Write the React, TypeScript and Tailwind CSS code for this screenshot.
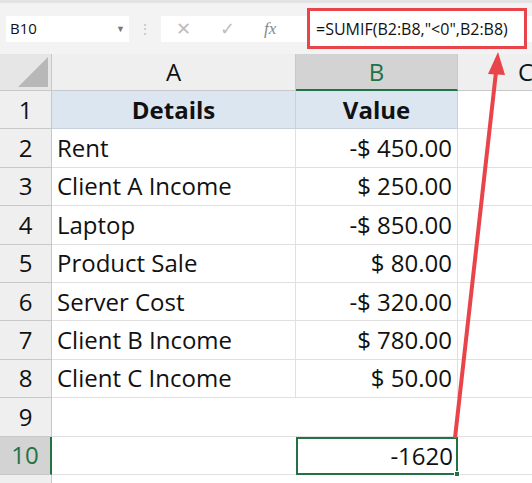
const rows: [string, string][] = [
  ['Rent', '-$ 450.00'],
  ['Client A Income', '$ 250.00'],
  ['Laptop', '-$ 850.00'],
  ['Product Sale', '$ 80.00'],
  ['Server Cost', '-$ 320.00'],
  ['Client B Income', '$ 780.00'],
  ['Client C Income', '$ 50.00'],
];

const font = { fontFamily: '"Open Sans", "Noto Sans", sans-serif' };

export default function App() {
  return (
    <div className="relative w-[532px] h-[483px] overflow-hidden bg-white text-[#111]" style={font}>
      {/* formula bar */}
      <div className="h-[54px] bg-[#f3f3f3] flex items-center pl-[6px] gap-[10px] border-t-[3px] border-[#e2e2e2]">
        <div className="w-[123px] h-[26px] bg-white flex items-center justify-between px-[4px] text-[15px]">
          <span>B10</span>
          <span className="text-[#777] text-[9px]">▼</span>
        </div>
        <span className="text-[#bbb] text-[12px] leading-none">⋮</span>
        <div className="flex-1 h-[26px] bg-white flex items-center">
          <div className="w-[140px] flex items-center justify-around text-[#bdbdbd] pr-[10px]">
            <span className="text-[18px]">✕</span>
            <span className="text-[18px]">✓</span>
            <span className="text-[#888] italic text-[17px]" style={{ fontFamily: '"Liberation Serif", serif' }}>fx</span>
          </div>
          <div className="ml-[6px] pl-[6px] h-[41px] w-[220px] border-[3px] border-[#e8444a] flex items-center text-[16px] bg-white whitespace-nowrap">
            =SUMIF(B2:B8,"&lt;0",B2:B8)
          </div>
        </div>
      </div>
      {/* grid */}
      <div className="grid grid-cols-[52px_244px_162px_74px] text-[24px]">
        <div className="h-[37px] bg-[#e6e6e6] border-r border-b border-[#c8c8c8] relative">
          <div className="absolute right-[3px] bottom-[3px] w-0 h-0 border-l-[30px] border-l-transparent border-b-[30px] border-b-[#b8b8b8]" />
        </div>
        <div className="h-[37px] bg-[#efefef] border-r border-b border-[#c8c8c8] flex items-center justify-center">A</div>
        <div className="h-[37px] bg-[#d3d3d3] border-r border-b-2 border-b-[#217346] border-r-[#c8c8c8] flex items-center justify-center text-[#217346]">B</div>
        <div className="h-[37px] bg-[#efefef] border-b border-[#c8c8c8] flex items-center pl-[60px]">C</div>

        <div className="h-[38.4px] bg-[#efefef] border-r border-b border-[#c8c8c8] flex items-center justify-center">1</div>
        <div className="h-[38.4px] bg-[#dce6f1] border-r border-b border-[#c8d0dc] flex items-center justify-center font-bold">Details</div>
        <div className="h-[38.4px] bg-[#dce6f1] border-r border-b border-[#c8d0dc] flex items-center justify-center font-bold">Value</div>
        <div className="h-[38.4px] border-b border-[#e0e0e0]" />

        {rows.map(([d, v], i) => (
          <>
            <div key={'n' + i} className="h-[38.4px] bg-[#efefef] border-r border-b border-[#c8c8c8] flex items-center justify-center">{i + 2}</div>
            <div key={'a' + i} className="h-[38.4px] border-r border-b border-[#e0e0e0] flex items-center pl-[5px] whitespace-nowrap">{d}</div>
            <div key={'b' + i} className="h-[38.4px] border-r border-b border-[#e0e0e0] flex items-center justify-end pr-[5px] whitespace-nowrap">{v}</div>
            <div key={'c' + i} className="h-[38.4px] border-b border-[#e0e0e0]" />
          </>
        ))}

        <div className="h-[38.4px] bg-[#efefef] border-r border-b border-[#c8c8c8] flex items-center justify-center">9</div>
        <div className="h-[38.4px] border-b border-[#e0e0e0]" />
        <div className="h-[38.4px] border-b border-[#e0e0e0]" />
        <div className="h-[38.4px] border-b border-[#e0e0e0]" />

        <div className="h-[38.4px] bg-[#d3d3d3] border-r-2 border-r-[#217346] border-b border-b-[#c8c8c8] flex items-center justify-center text-[#217346]">10</div>
        <div className="h-[38.4px] border-b border-[#e0e0e0]" />
        <div className="h-[38.4px] border-2 border-[#217346] flex items-center justify-end pr-[3px] relative">
          -1620
          <div className="absolute -right-[4px] -bottom-[4px] w-[6px] h-[6px] bg-[#217346] border border-white" />
        </div>
        <div className="h-[38.4px] border-b border-[#e0e0e0]" />
        <div className="h-[20px] bg-[#efefef] border-r border-[#c8c8c8]" />
      </div>
      {/* arrow */}
      <svg className="absolute inset-0 pointer-events-none" width="532" height="483">
        <line x1="455" y1="438" x2="496" y2="72" stroke="#e8444a" strokeWidth="4" />
        <polygon points="498,52 488,74 505,75" fill="#e8444a" />
      </svg>
    </div>
  );
}
